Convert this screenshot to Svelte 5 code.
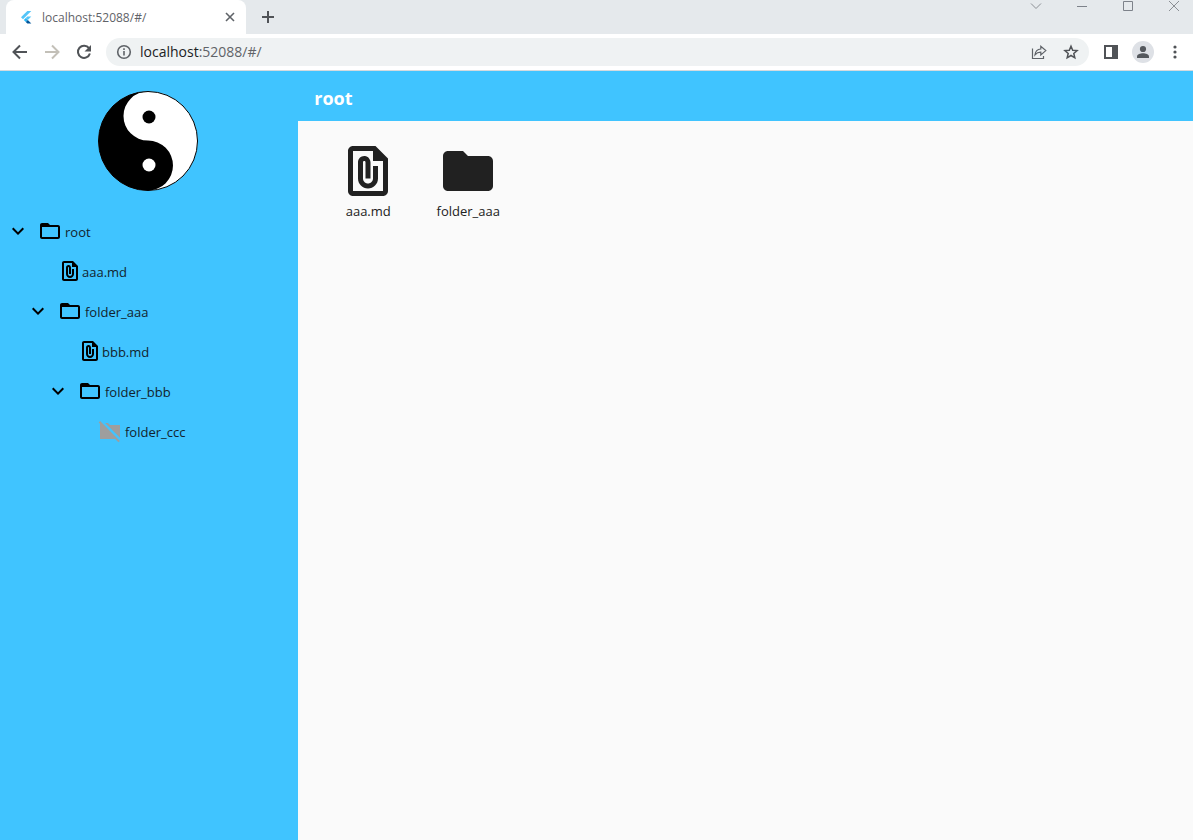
<script>
  const icons = {
    openFolder:
      'M20 6h-8l-2-2H4c-1.1 0-1.99.9-1.99 2L2 18c0 1.1.9 2 2 2h16c1.1 0 2-.9 2-2V8c0-1.1-.9-2-2-2zm0 12H4V8h16v10z',
    folder:
      'M10 4H4c-1.1 0-1.99.9-1.99 2L2 18c0 1.1.9 2 2 2h16c1.1 0 2-.9 2-2V8c0-1.1-.9-2-2-2h-8l-2-2z',
    emptyFolder:
      'M22 6H12l-2-2H7.17L22 18.83V6zM2.1 2.1L.69 3.51 2 4.83V20h15.17l3.31 3.31 1.41-1.41L2.1 2.1z',
    file:
      'M15 2H6c-1.1 0-2 .9-2 2v16c0 1.1.9 2 2 2h12c1.1 0 2-.9 2-2V7l-5-5zM6 20V4h8v4h4v12H6zm10-10v5c0 2.21-1.79 4-4 4s-4-1.79-4-4V8.5c0-1.47 1.26-2.64 2.76-2.49 1.3.13 2.24 1.32 2.24 2.63V15h-2V8.5c0-.28-.22-.5-.5-.5s-.5.22-.5.5V15c0 1.1.9 2 2 2s2-.9 2-2v-5h2z',
    chevron: 'M16.59 8.59L12 13.17 7.41 8.59 6 10l6 6 6-6z'
  };

  const tree = [
    { name: 'root', icon: 'openFolder', level: 0 },
    { name: 'aaa.md', icon: 'file', level: 1 },
    { name: 'folder_aaa', icon: 'openFolder', level: 1 },
    { name: 'bbb.md', icon: 'file', level: 2 },
    { name: 'folder_bbb', icon: 'openFolder', level: 2 },
    { name: 'folder_ccc', icon: 'emptyFolder', level: 3 }
  ];

  const entries = [
    { name: 'aaa.md', icon: 'file' },
    { name: 'folder_aaa', icon: 'folder' }
  ];
</script>

{#snippet glyph(name, size)}
  <svg class={name} viewBox="0 0 24 24" width={size} height={size} aria-hidden="true">
    <path d={icons[name]} fill="currentColor" />
  </svg>
{/snippet}

<div class="window">
  <div class="tabstrip">
    <div class="tab">
      <svg class="favicon" viewBox="0 0 16 16" width="16" height="16" aria-hidden="true">
        <path d="M9.3 2h4L5 10.3l-2-2z" fill="#54c5f8" />
        <path d="M9.3 7.6h4L9.8 11l-2-2z" fill="#54c5f8" />
        <path d="M5.8 11l2-2 2 2-2 2z" fill="#29b6f6" />
        <path d="M7.8 13l2-2 3.5 3.4h-4z" fill="#01579b" />
      </svg>
      <span class="tab-title">localhost:52088/#/</span>
      <button class="bare" aria-label="Close tab">
        <svg viewBox="0 0 16 16" width="16" height="16"><path d="M4 4l8 8M12 4l-8 8" stroke="#5f6368" stroke-width="1.6" /></svg>
      </button>
    </div>
    <button class="bare new-tab" aria-label="New tab">
      <svg viewBox="0 0 16 16" width="16" height="16"><path d="M8 2v12M2 8h12" stroke="#505357" stroke-width="2" /></svg>
    </button>
    <div class="controls">
      <button class="bare" aria-label="Search tabs">
        <svg viewBox="0 0 12 12" width="12" height="12"><path d="M1 3.5l5 5 5-5" fill="none" stroke="#8b8f94" /></svg>
      </button>
      <button class="bare" aria-label="Minimize">
        <svg viewBox="0 0 12 12" width="12" height="12"><path d="M1 6.5h10" stroke="#7d828a" /></svg>
      </button>
      <button class="bare" aria-label="Maximize">
        <svg viewBox="0 0 12 12" width="12" height="12"><path d="M1.500 1.500h9v9h-9z" fill="none" stroke="#7d828a" /></svg>
      </button>
      <button class="bare" aria-label="Close">
        <svg viewBox="0 0 12 12" width="12" height="12"><path d="M1 1l10 10M11 1L1 11" stroke="#8b8f94" /></svg>
      </button>
    </div>
  </div>

  <div class="toolbar">
    <button class="bare" aria-label="Back">
      <svg viewBox="0 0 16 16" width="16" height="16"><path d="M15 8H2M8 1.500L1.500 8 8 14.500" fill="none" stroke="#505357" stroke-width="2" /></svg>
    </button>
    <button class="bare" aria-label="Forward">
      <svg viewBox="0 0 16 16" width="16" height="16"><path d="M1 8h13M8 1.500L14.500 8 8 14.500" fill="none" stroke="#c3c0b8" stroke-width="2" /></svg>
    </button>
    <button class="bare" aria-label="Reload">
      <svg viewBox="0 0 16 16" width="16" height="16">
        <path d="M13 4.200A6.100 6.100 0 1 0 13.900 9.500" fill="none" stroke="#505357" stroke-width="2" />
        <path d="M15 1v6.500H8.500z" fill="#505357" />
      </svg>
    </button>
    <div class="omnibox">
      <svg viewBox="0 0 16 16" width="16" height="16" aria-hidden="true">
        <circle cx="8" cy="8" r="6.300" fill="none" stroke="#5f6368" stroke-width="1.600" />
        <path d="M8 7v4.500M8 4.300v1.700" stroke="#5f6368" stroke-width="1.600" />
      </svg>
      <span class="url">localhost<span class="port">:52088/#/</span></span>
      <button class="bare" aria-label="Share">
        <svg viewBox="0 0 16 16" width="16" height="16" fill="none" stroke="#5f6368" stroke-width="1.200">
          <path d="M1.500 4.500v10h11v-2.500" />
          <path d="M4 10.800C4.400 7.300 6.400 5.300 9.800 5V2.300l5 4.300-5 4.300V8.200C7.300 8.200 5.500 9 4 10.800z" />
        </svg>
      </button>
      <button class="bare" aria-label="Bookmark">
        <svg viewBox="0 0 16 16" width="16" height="16"><path d="M8 2.200l1.700 4 4.400.4-3.300 2.900 1 4.300L8 11.500l-3.800 2.300 1-4.300-3.300-2.900 4.400-.4z" fill="none" stroke="#505357" stroke-width="1.500" /></svg>
      </button>
    </div>
    <button class="bare" aria-label="Side panel">
      <svg viewBox="0 0 16 16" width="16" height="16"><path d="M1 1h14v14H1zM3 3v10h6V3z" fill="#505357" fill-rule="evenodd" /></svg>
    </button>
    <button class="bare profile" aria-label="Profile">
      <svg viewBox="0 0 16 16" width="16" height="16" fill="#54585d"><circle cx="8" cy="5" r="3.100" /><path d="M2 14v-1.500C2 10.400 5.500 9.300 8 9.300s6 1.100 6 3.200V14z" /></svg>
    </button>
    <button class="bare" aria-label="Menu">
      <svg viewBox="0 0 16 16" width="16" height="16" fill="#505357"><circle cx="8" cy="3" r="1.600" /><circle cx="8" cy="8" r="1.600" /><circle cx="8" cy="13" r="1.600" /></svg>
    </button>
  </div>

  <div class="app">
    <aside>
      <svg class="logo" viewBox="0 0 100 100" width="100" height="100" aria-hidden="true">
        <circle cx="50" cy="50" r="49.500" fill="#fff" stroke="#000" />
        <path d="M50 .5a24.500 24.500 0 0 0 0 49 24.700 24.700 0 0 1 0 50A49.500 49.500 0 0 1 50 .5z" />
        <circle cx="51" cy="26" r="6.500" />
        <circle cx="51" cy="74" r="6.500" fill="#fff" />
      </svg>
      <ul>
        {#each tree as node}
          <li style="--level: {node.level}">
            {#if node.icon === 'openFolder'}
              <button class="bare toggle" aria-label="Collapse {node.name}">{@render glyph('chevron', 24)}</button>
            {:else}
              <span class="toggle"></span>
            {/if}
            <button class="bare node" class:leaf={node.icon === 'file'}>
              {@render glyph(node.icon, 24)}
              <span>{node.name}</span>
            </button>
          </li>
        {/each}
      </ul>
    </aside>
    <main>
      <header><h1>root</h1></header>
      <div class="grid">
        {#each entries as entry}
          <button class="bare entry">
            {@render glyph(entry.icon, 60)}
            <span>{entry.name}</span>
          </button>
        {/each}
      </div>
    </main>
  </div>
</div>

<style>
  :global(body) {
    margin: 0;
  }
  * {
    box-sizing: border-box;
  }
  svg {
    display: block;
    flex: none;
  }
  .window {
    display: flex;
    flex-direction: column;
    min-height: 100vh;
    font: 13px/20px 'Open Sans', 'Noto Sans', sans-serif;
    color: #212121;
  }
  .bare {
    display: flex;
    align-items: center;
    justify-content: center;
    padding: 0;
    border: 0;
    background: none;
    font: inherit;
    color: inherit;
    cursor: pointer;
  }
  .tabstrip {
    display: flex;
    height: 34px;
    padding-left: 6px;
    background: #e5e9ec;
  }
  .tab {
    display: flex;
    align-items: center;
    gap: 8px;
    width: 240px;
    padding: 0 8px 0 12px;
    border-radius: 8px 8px 0 0;
    background: #fff;
    font-size: 12px;
    color: #5f6368;
  }
  .tab-title {
    flex: 1;
    padding-top: 2px;
  }
  .new-tab {
    margin-left: 14px;
  }
  .controls {
    display: flex;
    align-items: flex-start;
    gap: 34px;
    margin-left: auto;
    padding-right: 13px;
  }
  .toolbar {
    display: flex;
    align-items: center;
    gap: 16px;
    height: 37px;
    padding: 0 10px 0 12px;
    border-bottom: 1px solid #d5dade;
    background: #fff;
  }
  .omnibox {
    display: flex;
    flex: 1;
    align-items: center;
    gap: 16px;
    height: 28px;
    margin: 0 -2px;
    padding: 0 10px;
    border-radius: 14px;
    background: #eff2f3;
    font-size: 14px;
  }
  .url {
    flex: 1;
    margin-left: -8px;
    color: #202124;
  }
  .port {
    color: #5f6368;
  }
  .profile {
    width: 22px;
    height: 22px;
    margin: 0 -3px;
    border-radius: 50%;
    background: #dee1e6;
  }
  .app {
    display: flex;
    flex: 1;
  }
  aside {
    width: 25%;
    padding-top: 20px;
    background: #40c4ff;
  }
  .logo {
    margin: 0 0 20px calc(50% - 51px);
  }
  ul {
    margin: 0;
    padding: 0;
    list-style: none;
  }
  li {
    display: flex;
    align-items: center;
    height: 40px;
    padding-left: calc(var(--level) * 20px);
    color: #12232d;
  }
  .toggle {
    flex: none;
    width: 36px;
    height: 40px;
    margin-right: 2px;
  }
  .node {
    gap: 3px;
  }
  .leaf {
    gap: 0;
  }
  .node span {
    padding-top: 2px;
  }
  .node svg,
  .toggle svg {
    color: #000;
  }
  .node .emptyFolder {
    color: #9e9e9e;
  }
  main {
    flex: 1;
    background: #fafafa;
  }
  header {
    display: flex;
    align-items: center;
    height: 50px;
    padding: 4px 16px 0;
    background: #40c4ff;
  }
  h1 {
    margin: 0;
    font-size: 18px;
    line-height: 24px;
    font-weight: 700;
    color: #fff;
  }
  .grid {
    display: flex;
    flex-wrap: wrap;
    padding: 20px;
  }
  .entry {
    flex-direction: column;
    width: 100px;
  }
</style>
